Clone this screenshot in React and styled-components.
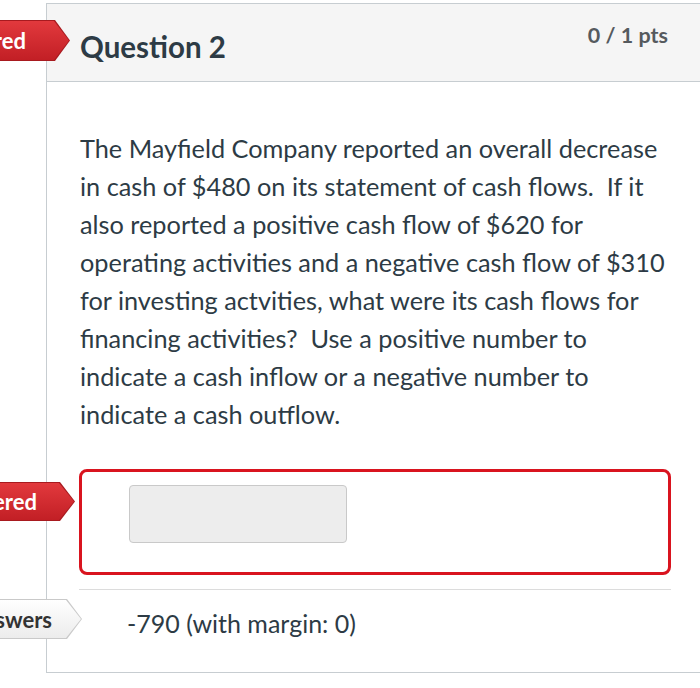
import React from "react";
import styled, { createGlobalStyle } from "styled-components";

const Global = createGlobalStyle`
  html, body { margin: 0; padding: 0; background: #ffffff; }
  body { font-family: Lato, "Open Sans", "Liberation Sans", sans-serif; color: #2d3b45; }
  * { box-sizing: border-box; }
`;

const Page = styled.div`
  position: relative;
  width: 700px;
  height: 688px;
  overflow: hidden;
  padding: 3px 0 0 46px;
`;

const Card = styled.div`
  border: 1px solid #c7cdd1;
  border-right: none;
  height: 670px;
  display: flex;
  flex-direction: column;
`;

const Header = styled.div`
  height: 78px;
  background: #f5f5f5;
  border-bottom: 1px solid #c7cdd1;
  display: flex;
  justify-content: space-between;
  align-items: flex-start;
  padding: 0 32px 0 33px;
`;

const Title = styled.h2`
  margin: 25px 0 0;
  font-size: 29.5px;
  font-weight: 700;
  line-height: 36px;
  color: #2d3b45;
`;

const Points = styled.div`
  margin-top: 16px;
  font-size: 21.5px;
  font-weight: 700;
  line-height: 30px;
  color: #555a5e;
`;

const Body = styled.div`
  padding: 47px 0 0 33px;
  display: flex;
  flex-direction: column;
`;

const QuestionText = styled.p`
  margin: 0;
  width: 590px;
  font-size: 25.3px;
  line-height: 38px;
  color: #2d3b45;
`;

const AnswerBox = styled.div`
  margin: 36px 0 0 -1px;
  width: 592px;
  height: 106px;
  border: 3px solid #d9141f;
  border-radius: 8px;
  padding: 13px 0 0 47px;
`;

const Input = styled.div`
  width: 218px;
  height: 58px;
  background: #ededed;
  border: 1px solid #c9c9c9;
  border-radius: 4px;
`;

const Divider = styled.div`
  margin: 14px 0 0 -1px;
  width: 592px;
  height: 1px;
  background: #dcdcdc;
`;

const CorrectRow = styled.div`
  padding: 18px 0 0 47px;
  font-size: 25px;
  line-height: 30px;
  color: #2d3b45;
`;

const Badge = styled.div`
  position: absolute;
  top: ${(p) => p.$top}px;
  left: ${(p) => p.$tip - 220}px;
  width: 220px;
  height: ${(p) => p.$h}px;
  background: ${(p) => (p.$light ? "#c9c9c9" : "#a81a1f")};
  clip-path: polygon(0 0, calc(100% - 15px) 0, 100% 50%, calc(100% - 15px) 100%, 0 100%);
`;

const BadgeFill = styled.div`
  position: absolute;
  inset: 1px 1px 1px 0;
  background: ${(p) =>
    p.$light
      ? "linear-gradient(#ffffff, #ececec)"
      : "linear-gradient(#e2393d, #c21f25)"};
  clip-path: polygon(0 0, calc(100% - 15px) 0, 100% 50%, calc(100% - 15px) 100%, 0 100%);
  display: flex;
  align-items: center;
  justify-content: flex-end;
  padding-right: ${(p) => p.$pad}px;
  font-size: 22px;
  font-weight: 700;
  white-space: nowrap;
  color: ${(p) => (p.$light ? "#333333" : "#ffffff")};
`;

function Arrow({ top, tip, h, pad, light, children }) {
  return (
    <Badge $top={top} $tip={tip} $h={h} $light={light}>
      <BadgeFill $pad={pad} $light={light}>
        {children}
      </BadgeFill>
    </Badge>
  );
}

export default function App() {
  return (
    <>
      <Global />
      <Page>
        <Card>
          <Header>
            <Title>Question 2</Title>
            <Points>0 / 1 pts</Points>
          </Header>
          <Body>
            <QuestionText>
              The Mayfield Company reported an overall decrease in cash of $480
              on its statement of cash flows.&nbsp; If it also reported a
              positive cash flow of $620 for operating activities and a
              negative cash flow of $310 for investing actvities, what were its
              cash flows for financing activities?&nbsp; Use a positive number
              to indicate a cash inflow or a negative number to indicate a cash
              outflow.
            </QuestionText>
            <AnswerBox>
              <Input />
            </AnswerBox>
            <Divider />
            <CorrectRow>-790 (with margin: 0)</CorrectRow>
          </Body>
        </Card>
        <Arrow top={20} tip={70} h={41} pad={43}>
          Unanswered
        </Arrow>
        <Arrow top={482} tip={75} h={39} pad={37}>
          You Answered
        </Arrow>
        <Arrow top={599} tip={82} h={40} pad={29} light>
          Correct Answers
        </Arrow>
      </Page>
    </>
  );
}
